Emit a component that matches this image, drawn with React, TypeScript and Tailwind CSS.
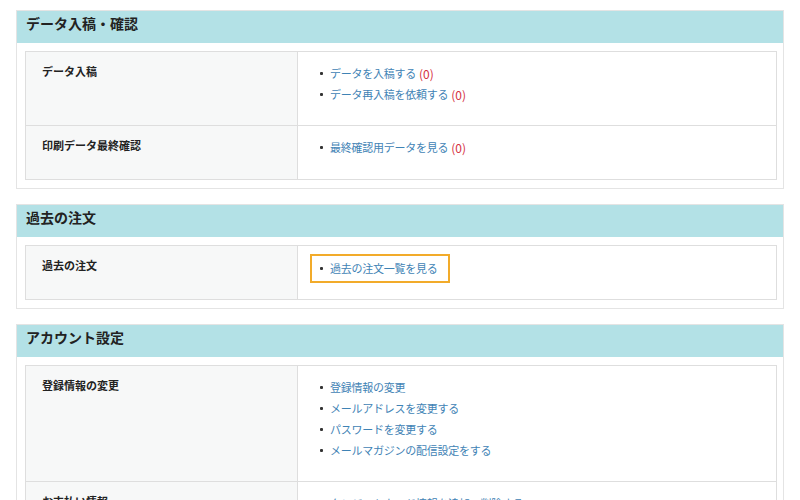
import React from "react";

type Item = { text: string; count?: number };
type Row = { label: string; items: Item[]; highlight?: boolean };
type Section = { title: string; rows: Row[] };

const sections: Section[] = [
  {
    title: "データ入稿・確認",
    rows: [
      {
        label: "データ入稿",
        items: [
          { text: "データを入稿する", count: 0 },
          { text: "データ再入稿を依頼する", count: 0 },
        ],
      },
      {
        label: "印刷データ最終確認",
        items: [{ text: "最終確認用データを見る", count: 0 }],
      },
    ],
  },
  {
    title: "過去の注文",
    rows: [
      {
        label: "過去の注文",
        items: [{ text: "過去の注文一覧を見る" }],
        highlight: true,
      },
    ],
  },
  {
    title: "アカウント設定",
    rows: [
      {
        label: "登録情報の変更",
        items: [
          { text: "登録情報の変更" },
          { text: "メールアドレスを変更する" },
          { text: "パスワードを変更する" },
          { text: "メールマガジンの配信設定をする" },
        ],
      },
      {
        label: "お支払い情報",
        items: [{ text: "クレジットカード情報を追加・削除する" }],
      },
    ],
  },
];

function LinkItem({ item }: { item: Item }) {
  return (
    <li className="flex items-center h-[21px]">
      <span className="w-[3px] h-[3px] rounded-[1px] bg-[#333] mr-[7px] shrink-0" />
      <a href="#" className="text-[#3f83b5] tracking-[-0.25px]">
        {item.text}
      </a>
      {item.count !== undefined && (
        <span className="text-[#d5303f] text-[12px] ml-[3px]">({item.count})</span>
      )}
    </li>
  );
}

function SectionBox({ section }: { section: Section }) {
  return (
    <div className="border border-[#e4e4e4] bg-white pb-[8px]">
      <h2 className="h-[32px] bg-[#b3e1e6] pl-[9px] pt-[2px] text-[14px] leading-[21px] font-bold text-[#222]">
        {section.title}
      </h2>
      <div className="ml-[8px] mr-[6px] mt-[8px] border-l border-t border-[#dedede]">
        {section.rows.map((row) => (
          <div key={row.label} className="grid grid-cols-[272px_1fr]">
            <div className="border-r border-b border-[#dedede] bg-[#f7f8f8] pl-[16px] pt-[11px] text-[11px] font-bold text-[#222]">
              {row.label}
            </div>
            <div className="border-r border-b border-[#dedede] pl-[12px] pt-[11px] pb-[20px] min-h-[54px] text-[11px]">
              {row.highlight ? (
                <div className="inline-block border-2 border-[#f2ab2a] pl-[8px] pr-[10px] py-[2px] -my-[4px]">
                  <ul>
                    {row.items.map((it) => (
                      <LinkItem key={it.text} item={it} />
                    ))}
                  </ul>
                </div>
              ) : (
                <ul className="pl-[10px]">
                  {row.items.map((it) => (
                    <LinkItem key={it.text} item={it} />
                  ))}
                </ul>
              )}
            </div>
          </div>
        ))}
      </div>
    </div>
  );
}

export default function App() {
  return (
    <div
      className="bg-white px-[16px] pt-[10px] flex flex-col gap-[15px] text-[#222]"
      style={{ fontFamily: '"Noto Sans CJK JP", "Noto Sans", sans-serif' }}
    >
      {sections.map((s) => (
        <SectionBox key={s.title} section={s} />
      ))}
    </div>
  );
}
